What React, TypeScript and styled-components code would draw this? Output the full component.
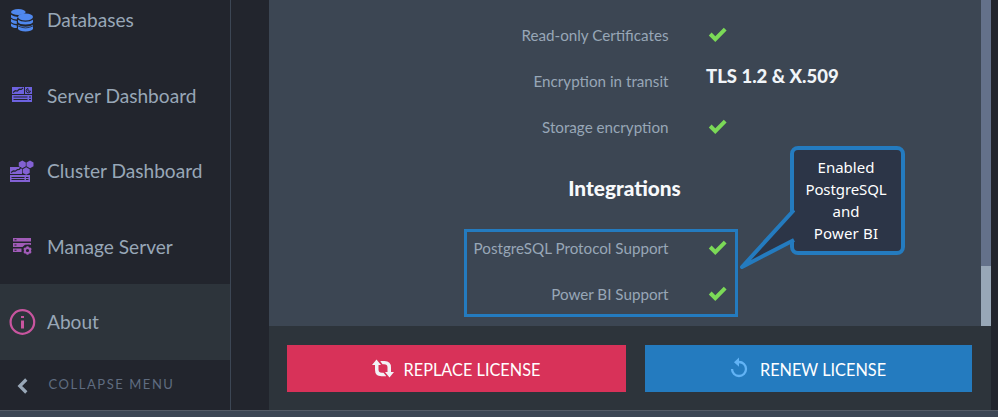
import React from "react";
import styled, { createGlobalStyle } from "styled-components";

const GlobalStyle = createGlobalStyle`
  * { box-sizing: border-box; }
  body { margin: 0; background: #22252d; font-family: Lato, "Liberation Sans", sans-serif; }
`;

const Page = styled.div`
  width: 998px;
  height: 417px;
  display: flex;
  flex-direction: column;
  overflow: hidden;
  background: #22252d;
`;

const Workspace = styled.div`
  height: 410px;
  display: flex;
`;

const StatusBar = styled.div`
  height: 7px;
  background: #3c4654;
  border-top: 1px solid #545b66;
`;

const Sidebar = styled.aside`
  width: 231px;
  height: 410px;
  display: flex;
  flex-direction: column;
  overflow: hidden;
  border-right: 1px solid #3c4654;
`;

const Nav = styled.nav`
  margin-top: -18px;
  display: flex;
  flex-direction: column;
`;

const NavItem = styled.a<{ $active?: boolean }>`
  height: ${(p) => (p.$active ? 76 : 75.5)}px;
  display: flex;
  align-items: center;
  color: #98a7b7;
  background: ${(p) => (p.$active ? "#2d343b" : "transparent")};
`;

const NavIcon = styled.span`
  width: 47px;
  height: 28px;
  flex: none;
  svg { display: block; }
`;

const NavLabel = styled.span`
  padding-top: 0.5px;
  white-space: nowrap;
  font-size: 19.1px;
  line-height: 24px;
`;

const Collapse = styled.div`
  height: 50px;
  padding-bottom: 2px;
  display: flex;
  align-items: center;
  color: #5f6c80;
  font-size: 13px;
  letter-spacing: 1.55px;
  svg { display: block; margin: 4px 20.5px 0 17px; }
`;

const Panel = styled.main`
  width: 722px;
  margin-left: 38px;
  display: flex;
  flex-direction: column;
`;

const ScrollArea = styled.div`
  height: 326px;
  display: flex;
  background: #3c4653;
`;

const Features = styled.div`
  position: relative;
  width: 712px;
  padding-top: 12px;
`;

const FeatureRow = styled.div`
  height: 46px;
  display: grid;
  grid-template-columns: 399.5px 1fr;
  column-gap: 37.5px;
  align-items: center;
`;

const FeatureLabel = styled.span`
  text-align: right;
  color: #98a7b7;
  font-size: 15.2px;
  line-height: 20px;
`;

const FeatureValue = styled.strong`
  display: block;
  padding-bottom: 11px;
  color: #f0f4f8;
  font-size: 18.5px;
  font-weight: 900;
  line-height: 22px;
`;

const CheckIcon = styled.svg`
  display: block;
  margin-left: 2px;
`;

const SectionTitle = styled.h2`
  width: 711px;
  height: 75px;
  margin: 0;
  text-align: center;
  color: #f7f9fb;
  font-size: 20.8px;
  font-weight: 900;
  line-height: 76px;
`;

const Highlight = styled.div`
  position: absolute;
  left: 195px;
  top: 229px;
  width: 274px;
  height: 88px;
  border: 3px solid #247bbf;
`;

const Callout = styled.div`
  position: absolute;
  left: 521px;
  top: 146px;
  width: 115px;
  height: 109px;
  padding: 6px 3px 0 0;
  border: 4px solid #247bbf;
  border-radius: 8px;
  background: #2c3547;
  color: #fff;
  text-align: center;
  font-family: "Noto Sans", "Open Sans", sans-serif;
  font-size: 15px;
  line-height: 22px;
`;

const CalloutLine = styled.div<{ $spacing?: number }>`
  letter-spacing: ${(p) => p.$spacing ?? 0}px;
`;

const Tail = styled.svg`
  position: absolute;
  left: -56px;
  top: 50px;
`;

const ScrollTrack = styled.div`
  width: 10px;
  display: flex;
  flex-direction: column;
  justify-content: flex-end;
  background: #64718a;
`;

const ScrollThumb = styled.div`
  height: 60px;
  background: #98a7b7;
`;

const Footer = styled.footer`
  height: 84px;
  padding: 19px 19px 0 18px;
  display: flex;
  gap: 19px;
  background: #2d343b;
`;

const Button = styled.button<{ $color: string; $width: number; $gap: number }>`
  width: ${(p) => p.$width}px;
  height: 47px;
  padding: 0 1px 0 0;
  border: 0;
  display: flex;
  align-items: center;
  justify-content: center;
  gap: ${(p) => p.$gap}px;
  background: ${(p) => p.$color};
  color: #fff;
  font-family: inherit;
  font-size: 16.3px;
  svg { display: block; }
`;

const ButtonText = styled.span`
  padding-top: 2px;
  line-height: 20px;
`;

const DatabasesIcon = () => (
  <svg width="44" height="28" viewBox="0 0 44 28" fill="#4f88ee">
    <ellipse cx="18.3" cy="6" rx="7.3" ry="3" />
    <path d="M11 8.800q2.500 2 7 2.200-1.300 1-1.200 2.600-4.200-.4-5.800-2.200z" />
    <path d="M11 13.100q2.200 1.600 5.800 1.900v2.900Q12 17.500 11 15.700z" />
    <path d="M11 17.500q2.200 1.600 5.800 1.900v2.700Q12 21.700 11 19.900z" />
    <ellipse cx="25.500" cy="11" rx="7.500" ry="3.400" />
    <path d="M18 13.800q2.700 2 7.500 2t7.500-2v2.500q-1.500 2.200-7.500 2.200T18 16.300z" />
    <path d="M18 18.800q2.700 2 7.500 2t7.500-2v4.200q-1.500 2.400-7.500 2.400T18 23z" />
    <path d="M18 19.900q7.500 4 15 0" fill="none" stroke="#22252d" strokeWidth=".8" />
  </svg>
);

const ServerDashboardIcon = () => (
  <svg width="44" height="28" viewBox="0 0 44 28">
    <path fill="#6d62df" d="M12 6h12v7H12zM25 6h7v7h-7zM12 14h20v7H12z" />
    <g fill="none" stroke="#22252d">
      <path d="m13 11.500 2.200-1.800 2 .4 2-1.900 2 .2L23 7" strokeWidth="1.200" />
      <path d="M28 7.500a2.200 2.200 0 1 0 2.500 2.600h-2.500z" />
      <path d="M13.500 16h14M13.500 18.500h14M29 16h2M29 18.500h2" />
    </g>
  </svg>
);

const ClusterDashboardIcon = () => (
  <svg width="44" height="28" viewBox="0 0 44 28">
    <path fill="#8361d3" d="m22.300 3.500 3.500 2v3.800l-3.500 2-3.500-2V5.500zM30 3.500l3.500 2v3.800l-3.500 2-3.500-2V5.500zM26.200 10.200l3.500 2V16l-3.500 1.700-3.500-1.700v-3.800zM10 10h9l3 2v5H10zM10 18h20v7H10z" />
    <g fill="none" stroke="#22252d">
      <path d="m11 15.500 2.300-1.600 2 .3 2.200-1.600 1.700-.2 1.800-2" strokeWidth="1.200" />
      <path d="M11.500 20.500h13M11.500 22.500h13M26 20.500h2.500M26 22.500h2.500" />
    </g>
  </svg>
);

const ManageServerIcon = () => (
  <svg width="44" height="28" viewBox="0 0 44 28">
    <path fill="#a15bb8" d="M13 6h18v3.500H13zM13 11h18v2l-2-.5-4 .2-2.500 2.300H13zM13 16.500h8.500V20H13z" />
    <path stroke="#22252d" d="M14.500 7.750h2M14.500 13h2M14.500 18.250h2" />
    <g fill="none" stroke="#a15bb8" strokeWidth="2">
      <circle cx="27.500" cy="18.500" r="2.600" />
      <path d="M27.500 14.200V16m0 5v1.800M23.800 16.300l1.600 1m4.300 2.500 1.500.9M23.800 20.700l1.600-.9m4.300-2.500 1.500-1" />
    </g>
  </svg>
);

const AboutIcon = () => (
  <svg width="44" height="28" viewBox="0 0 44 28">
    <circle cx="22.400" cy="14" r="11.800" fill="none" stroke="#c8559f" strokeWidth="2.200" />
    <path fill="#c8559f" d="M21 8h3v2h-3zM21 12.500h3v8h-3z" />
  </svg>
);

const Check = () => (
  <CheckIcon width="20" height="16" viewBox="0 0 20 16">
    <path d="m.8 8.400 2.800-2.800L7.300 9.200 15.800.8l2.800 2.800L7.300 14.900z" fill="#7bd957" />
  </CheckIcon>
);

const ReplaceIcon = () => (
  <svg width="22" height="20" viewBox="0 0 22 20">
    <path fill="#f2f2f6" d="M4.500.5 9 6H6.500v4.500q0 3.300 3.500 3.300h1.500l2.500 3v.4H9.500q-6.500 0-6.500-6.500V6H0z" />
    <path fill="#f2f2f6" d="M17.500 18.500 13 13h2.500V8.500q0-3.300-3.500-3.300h-1.500L8.500 2.500v-.4h4q6.500 0 6.500 6.500V13h3z" />
  </svg>
);

const RenewIcon = () => (
  <svg width="18" height="23" viewBox="0 0 18 23">
    <path d="M9 5a7 7 0 1 1-7 7" fill="none" stroke="#62b3f5" strokeWidth="2.300" />
    <path d="M9 .5v9.300L4 5.200z" fill="#62b3f5" />
  </svg>
);

const menu = [
  { label: "Databases", Icon: DatabasesIcon },
  { label: "Server Dashboard", Icon: ServerDashboardIcon },
  { label: "Cluster Dashboard", Icon: ClusterDashboardIcon },
  { label: "Manage Server", Icon: ManageServerIcon },
  { label: "About", Icon: AboutIcon, active: true },
];

const Feature = ({ label, value }: { label: string; value?: string }) => (
  <FeatureRow>
    <FeatureLabel>{label}</FeatureLabel>
    {value ? <FeatureValue>{value}</FeatureValue> : <Check />}
  </FeatureRow>
);

export default function App() {
  return (
    <Page>
      <GlobalStyle />
      <Workspace>
        <Sidebar>
          <Nav>
            {menu.map(({ label, Icon, active }) => (
              <NavItem key={label} $active={active}>
                <NavIcon><Icon /></NavIcon>
                <NavLabel>{label}</NavLabel>
              </NavItem>
            ))}
          </Nav>
          <Collapse>
            <svg width="11" height="16" viewBox="0 0 11 16">
              <path d="M9.300 1.500 2.800 8l6.500 6.500" fill="none" stroke="#98a7b7" strokeWidth="3.200" />
            </svg>
            COLLAPSE MENU
          </Collapse>
        </Sidebar>
        <Panel>
          <ScrollArea>
            <Features>
              <Feature label="Read-only Certificates" />
              <Feature label="Encryption in transit" value="TLS 1.2 & X.509" />
              <Feature label="Storage encryption" />
              <SectionTitle>Integrations</SectionTitle>
              <Feature label="PostgreSQL Protocol Support" />
              <Feature label="Power BI Support" />
              <Highlight />
              <Callout>
                <CalloutLine>Enabled</CalloutLine>
                <CalloutLine $spacing={-0.1}>PostgreSQL</CalloutLine>
                <CalloutLine>and</CalloutLine>
                <CalloutLine $spacing={0.2}>Power BI</CalloutLine>
                <Tail width="57" height="70" viewBox="0 0 57 70">
                  <path d="M56 10 4 67l52-27" fill="#2c3547" stroke="#247bbf" strokeWidth="4" strokeLinejoin="round" />
                </Tail>
              </Callout>
            </Features>
            <ScrollTrack><ScrollThumb /></ScrollTrack>
          </ScrollArea>
          <Footer>
            <Button $color="#d83259" $width={339} $gap={10}>
              <ReplaceIcon />
              <ButtonText>REPLACE LICENSE</ButtonText>
            </Button>
            <Button $color="#247bbf" $width={327} $gap={12}>
              <RenewIcon />
              <ButtonText>RENEW LICENSE</ButtonText>
            </Button>
          </Footer>
        </Panel>
      </Workspace>
      <StatusBar />
    </Page>
  );
}
